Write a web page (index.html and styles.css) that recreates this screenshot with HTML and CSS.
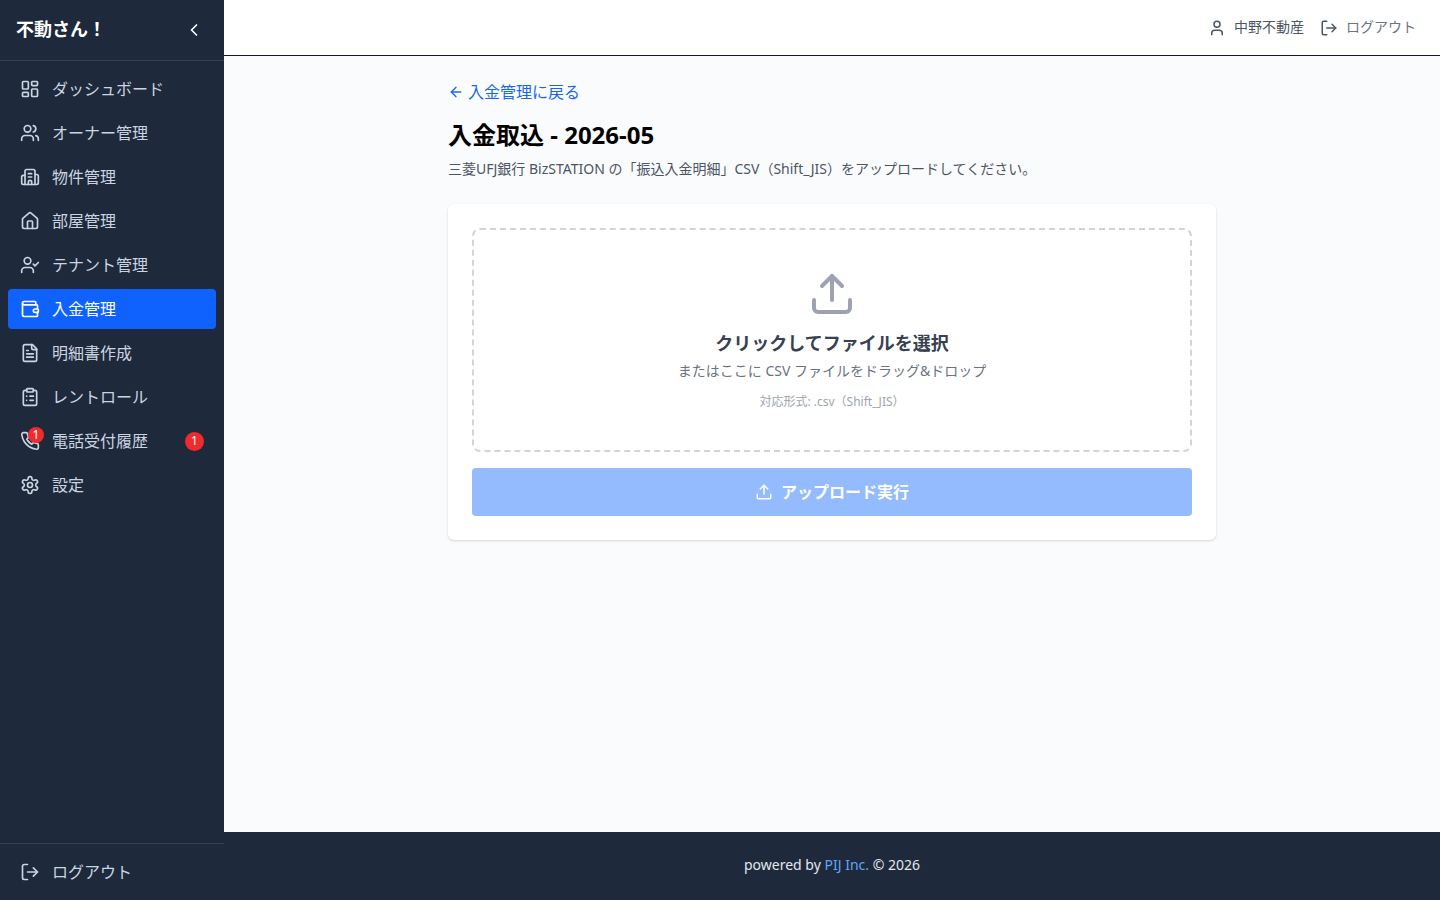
FILE: index.html
```html
<!DOCTYPE html>
<html lang="ja">
<head>
<meta charset="utf-8">
<title>入金取込 - 2026-05</title>
<link rel="stylesheet" href="styles.css">
</head>
<body>
<aside class="sidebar">
  <div class="brand">
    <span class="brand-name">不動さん！</span>
    <svg class="icon chevron" viewBox="0 0 24 24"><path d="m15 18-6-6 6-6"/></svg>
  </div>
  <nav class="nav">
    <a class="nav-item"><svg class="icon" viewBox="0 0 24 24"><rect width="7" height="9" x="3" y="3" rx="1"/><rect width="7" height="5" x="14" y="3" rx="1"/><rect width="7" height="9" x="14" y="12" rx="1"/><rect width="7" height="5" x="3" y="16" rx="1"/></svg><span>ダッシュボード</span></a>
    <a class="nav-item"><svg class="icon" viewBox="0 0 24 24"><path d="M16 21v-2a4 4 0 0 0-4-4H6a4 4 0 0 0-4 4v2"/><circle cx="9" cy="7" r="4"/><path d="M22 21v-2a4 4 0 0 0-3-3.87"/><path d="M16 3.13a4 4 0 0 1 0 7.75"/></svg><span>オーナー管理</span></a>
    <a class="nav-item"><svg class="icon" viewBox="0 0 24 24"><path d="M10 12h4"/><path d="M10 8h4"/><path d="M14 21v-3a2 2 0 0 0-4 0v3"/><path d="M6 10H4a2 2 0 0 0-2 2v7a2 2 0 0 0 2 2h16a2 2 0 0 0 2-2v-8a2 2 0 0 0-2-2h-2"/><path d="M6 21V5a2 2 0 0 1 2-2h8a2 2 0 0 1 2 2v16"/></svg><span>物件管理</span></a>
    <a class="nav-item"><svg class="icon" viewBox="0 0 24 24"><path d="M15 21v-8a1 1 0 0 0-1-1h-4a1 1 0 0 0-1 1v8"/><path d="M3 10a2 2 0 0 1 .709-1.528l7-5.999a2 2 0 0 1 2.582 0l7 5.999A2 2 0 0 1 21 10v9a2 2 0 0 1-2 2H5a2 2 0 0 1-2-2z"/></svg><span>部屋管理</span></a>
    <a class="nav-item"><svg class="icon" viewBox="0 0 24 24"><path d="M16 21v-2a4 4 0 0 0-4-4H6a4 4 0 0 0-4 4v2"/><circle cx="9" cy="7" r="4"/><path d="m16 11 2 2 4-4"/></svg><span>テナント管理</span></a>
    <a class="nav-item active"><svg class="icon" viewBox="0 0 24 24"><path d="M19 7V4a1 1 0 0 0-1-1H5a2 2 0 0 0 0 4h15a1 1 0 0 1 1 1v4h-3a2 2 0 0 0 0 4h3a1 1 0 0 0 1-1v-2a1 1 0 0 0-1-1"/><path d="M3 5v14a2 2 0 0 0 2 2h15a1 1 0 0 0 1-1v-4"/></svg><span>入金管理</span></a>
    <a class="nav-item"><svg class="icon" viewBox="0 0 24 24"><path d="M15 2H6a2 2 0 0 0-2 2v16a2 2 0 0 0 2 2h12a2 2 0 0 0 2-2V7Z"/><path d="M14 2v4a2 2 0 0 0 2 2h4"/><path d="M10 9H8"/><path d="M16 13H8"/><path d="M16 17H8"/></svg><span>明細書作成</span></a>
    <a class="nav-item"><svg class="icon" viewBox="0 0 24 24"><rect width="8" height="4" x="8" y="2" rx="1"/><path d="M16 4h2a2 2 0 0 1 2 2v14a2 2 0 0 1-2 2H6a2 2 0 0 1-2-2V6a2 2 0 0 1 2-2h2"/><path d="M12 11h4"/><path d="M12 16h4"/><path d="M8 11h.01"/><path d="M8 16h.01"/></svg><span>レントロール</span></a>
    <a class="nav-item">
      <span class="icon-wrap">
        <svg class="icon" viewBox="0 0 24 24"><path d="M22 16.92v3a2 2 0 0 1-2.18 2 19.79 19.79 0 0 1-8.63-3.07 19.5 19.5 0 0 1-6-6 19.79 19.79 0 0 1-3.07-8.67A2 2 0 0 1 4.11 2h3a2 2 0 0 1 2 1.72 12.84 12.84 0 0 0 .7 2.81 2 2 0 0 1-.45 2.11L8.09 9.91a16 16 0 0 0 6 6l1.27-1.27a2 2 0 0 1 2.11-.45 12.84 12.84 0 0 0 2.81.7A2 2 0 0 1 22 16.92z"/></svg>
        <span class="badge badge-icon">1</span>
      </span>
      <span class="nav-grow">電話受付履歴</span>
      <span class="badge badge-row">1</span>
    </a>
    <a class="nav-item"><svg class="icon" viewBox="0 0 24 24"><path d="M12.22 2h-.44a2 2 0 0 0-2 2v.18a2 2 0 0 1-1 1.73l-.43.25a2 2 0 0 1-2 0l-.15-.08a2 2 0 0 0-2.73.73l-.22.38a2 2 0 0 0 .73 2.73l.15.1a2 2 0 0 1 1 1.72v.51a2 2 0 0 1-1 1.74l-.15.09a2 2 0 0 0-.73 2.73l.22.38a2 2 0 0 0 2.73.73l.15-.08a2 2 0 0 1 2 0l.43.25a2 2 0 0 1 1 1.73V20a2 2 0 0 0 2 2h.44a2 2 0 0 0 2-2v-.18a2 2 0 0 1 1-1.73l.43-.25a2 2 0 0 1 2 0l.15.08a2 2 0 0 0 2.73-.73l.22-.39a2 2 0 0 0-.73-2.73l-.15-.08a2 2 0 0 1-1-1.74v-.5a2 2 0 0 1 1-1.74l.15-.09a2 2 0 0 0 .73-2.73l-.22-.38a2 2 0 0 0-2.73-.73l-.15.08a2 2 0 0 1-2 0l-.43-.25a2 2 0 0 1-1-1.73V4a2 2 0 0 0-2-2z"/><circle cx="12" cy="12" r="3"/></svg><span>設定</span></a>
  </nav>
  <div class="sidebar-foot">
    <a class="nav-item"><svg class="icon" viewBox="0 0 24 24"><path d="M9 21H5a2 2 0 0 1-2-2V5a2 2 0 0 1 2-2h4"/><path d="m16 17 5-5-5-5"/><path d="M21 12H9"/></svg><span>ログアウト</span></a>
  </div>
</aside>
<div class="column">
  <header class="topbar">
    <span class="top-user"><svg class="icon icon-top" viewBox="0 0 24 24"><path d="M19 21v-2a4 4 0 0 0-4-4H9a4 4 0 0 0-4 4v2"/><circle cx="12" cy="7" r="4"/></svg><span class="top-label">中野不動産</span></span>
    <a class="top-logout"><svg class="icon icon-top" viewBox="0 0 24 24"><path d="M9 21H5a2 2 0 0 1-2-2V5a2 2 0 0 1 2-2h4"/><path d="m16 17 5-5-5-5"/><path d="M21 12H9"/></svg><span class="top-label">ログアウト</span></a>
  </header>
  <main class="main">
    <div class="content">
      <a class="back"><svg class="icon icon-back" viewBox="0 0 24 24"><path d="m12 19-7-7 7-7"/><path d="M19 12H5"/></svg>入金管理に戻る</a>
      <h1 class="title">入金取込 - 2026-05</h1>
      <p class="lead">三菱UFJ銀行 BizSTATION の「振込入金明細」CSV（Shift_JIS）をアップロードしてください。</p>
      <section class="card">
        <div class="drop">
          <svg class="icon icon-upload" viewBox="0 0 24 24"><path d="M21 15v4a2 2 0 0 1-2 2H5a2 2 0 0 1-2-2v-4"/><path d="m17 8-5-5-5 5"/><path d="M12 3v12"/></svg>
          <p class="drop-title">クリックしてファイルを選択</p>
          <p class="drop-sub">またはここに CSV ファイルをドラッグ&amp;ドロップ</p>
          <p class="drop-note">対応形式: .csv（Shift_JIS）</p>
        </div>
        <button class="submit" type="button" disabled><svg class="icon icon-btn" viewBox="0 0 24 24"><path d="M21 15v4a2 2 0 0 1-2 2H5a2 2 0 0 1-2-2v-4"/><path d="m17 8-5-5-5 5"/><path d="M12 3v12"/></svg><span class="submit-label">アップロード実行</span></button>
      </section>
    </div>
  </main>
  <footer class="footer">powered by&nbsp;<a class="footer-link">PIJ Inc.</a>&nbsp;© 2026</footer>
</div>
</body>
</html>
```
FILE: styles.css
```css
* { box-sizing: border-box; }
html, body { height: 100%; }
body {
  margin: 0;
  display: flex;
  height: 100vh;
  overflow: hidden;
  font-family: "Noto Sans", "Noto Sans CJK JP", sans-serif;
  font-size: 16px;
  color: #111827;
  background: #fafbfd;
}
p, h1 { margin: 0; }

.icon {
  width: 20px;
  height: 20px;
  flex: none;
  fill: none;
  stroke: currentColor;
  stroke-width: 2;
  stroke-linecap: round;
  stroke-linejoin: round;
  display: block;
}

.sidebar {
  width: 224px;
  flex: none;
  background: #1e293b;
  color: #cbd5e1;
  display: flex;
  flex-direction: column;
}
.brand {
  height: 61px;
  flex: none;
  display: flex;
  align-items: center;
  justify-content: space-between;
  padding: 0 20px 2px 16px;
  border-bottom: 1px solid #334155;
}
.brand-name { font-size: 18px; font-weight: 700; color: #fff; line-height: 28px; }
.chevron { color: #fff; margin-top: 2px; }
.nav {
  flex: 1;
  display: flex;
  flex-direction: column;
  gap: 4px;
  padding: 8px 8px 0;
}
.nav-item {
  height: 40px;
  display: flex;
  align-items: center;
  gap: 12px;
  padding: 0 12px;
  border-radius: 4px;
  line-height: 24px;
  white-space: nowrap;
}
.nav-item.active { background: #0f62fe; color: #fff; }
.nav-grow { flex: 1; }
.icon-wrap { position: relative; display: block; }
.badge {
  background: #ef2b2d;
  color: #fff;
  border-radius: 50%;
  display: flex;
  align-items: center;
  justify-content: center;
  font-size: 12px;
}
.badge-icon { position: absolute; top: -4px; left: 8px; width: 16px; height: 16px; }
.badge-row { width: 19px; height: 19px; }
.sidebar-foot {
  height: 57px;
  flex: none;
  border-top: 1px solid #334155;
  padding: 8px 8px 0;
}

.column { flex: 1; min-width: 0; display: flex; flex-direction: column; }
.topbar {
  height: 56px;
  flex: none;
  background: #fff;
  border-bottom: 1px solid #111827;
  display: flex;
  justify-content: flex-end;
  align-items: center;
  gap: 16px;
  padding: 0 24px;
  font-size: 14px;
  color: #4b5563;
}
.top-user, .top-logout { display: flex; align-items: center; gap: 8px; }
.top-logout { color: #6b7280; }
.top-label { margin-bottom: 4px; }
.icon-top { width: 18px; height: 18px; color: #4b5563; }

.main { flex: 1; min-height: 0; padding: 24px 24px 0; }
.content { width: 768px; margin: 0 auto; }
.back {
  display: flex;
  align-items: center;
  gap: 4px;
  color: #1a66ee;
  font-size: 16px;
  line-height: 24px;
}
.icon-back { width: 16px; height: 16px; }
.title {
  margin-top: 15px;
  font-size: 24px;
  line-height: 32px;
  font-weight: 700;
  color: #000;
}
.lead {
  margin-top: 8px;
  font-size: 14px;
  line-height: 20px;
  color: #4b5563;
}
.card {
  margin-top: 25px;
  background: #fff;
  border-radius: 6px;
  padding: 24px;
  box-shadow: 0 1px 3px rgba(0, 0, 0, .1), 0 1px 2px rgba(0, 0, 0, .06);
}
.drop {
  height: 224px;
  border: 2px dashed #d1d5db;
  border-radius: 8px;
  display: flex;
  flex-direction: column;
  align-items: center;
  padding-top: 40px;
}
.icon-upload { width: 48px; height: 48px; color: #9ca3af; }
.drop-title { margin-top: 11px; font-size: 18px; line-height: 28px; font-weight: 700; color: #374151; }
.drop-sub { margin-top: 4px; font-size: 14px; line-height: 20px; color: #6b7280; }
.drop-note { margin-top: 13px; font-size: 12px; line-height: 16px; color: #9ca3af; }
.submit {
  margin-top: 16px;
  width: 100%;
  height: 48px;
  border: 0;
  border-radius: 4px;
  background: #93bbfd;
  color: #fff;
  font: inherit;
  font-weight: 700;
  display: flex;
  align-items: center;
  justify-content: center;
  gap: 8px;
}
.submit-label { margin-bottom: 2px; }
.icon-btn { width: 18px; height: 18px; }

.footer {
  height: 68px;
  flex: none;
  background: #1e293b;
  color: #e2e8f0;
  font-size: 14px;
  display: flex;
  align-items: center;
  justify-content: center;
  padding-bottom: 4px;
}
.footer-link { color: #60a5fa; }
```
